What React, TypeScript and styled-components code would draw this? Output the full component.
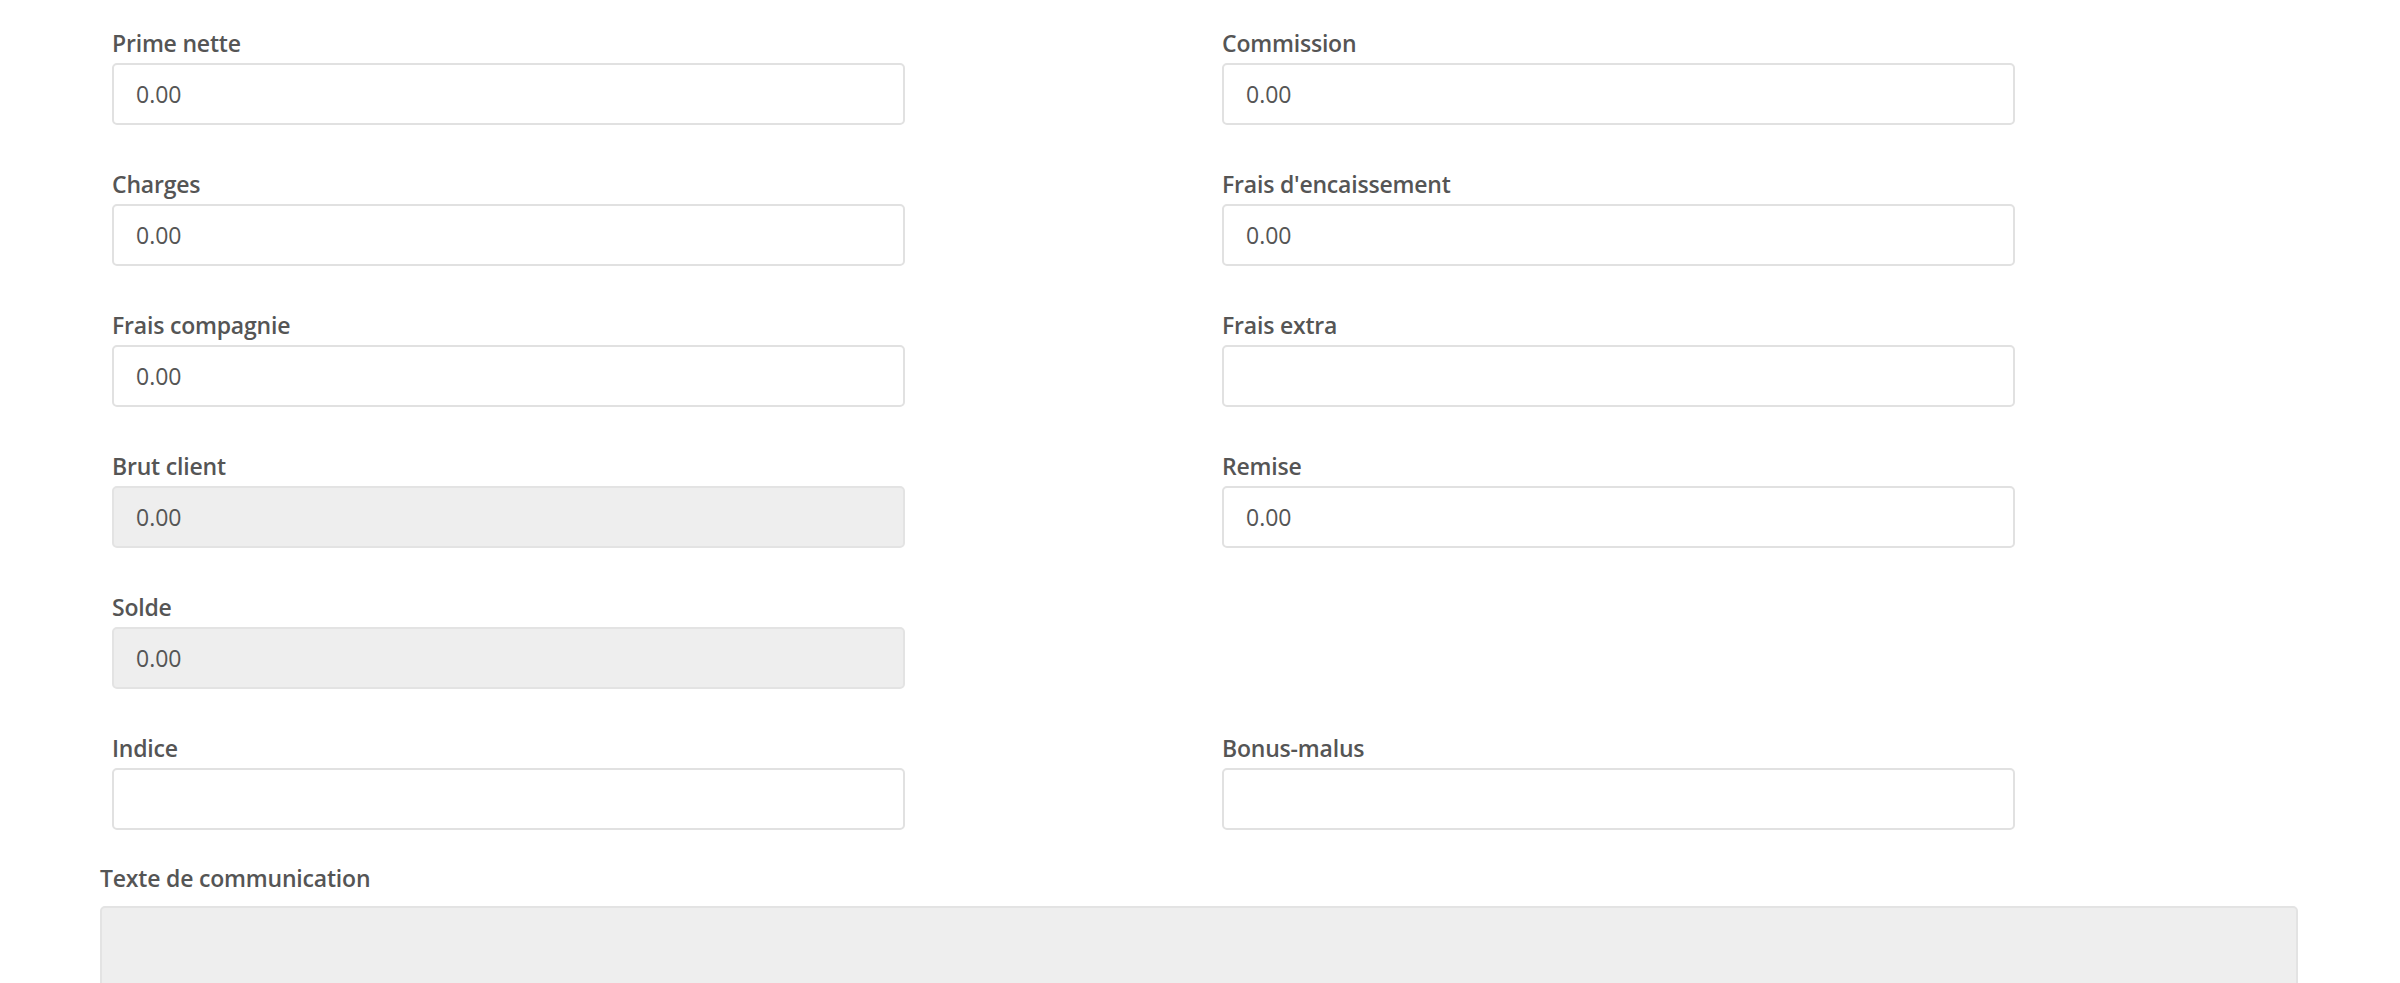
import React, { ReactElement } from "react";
import styled, { createGlobalStyle } from "styled-components";

const GlobalStyle = createGlobalStyle`
  html, body {
    margin: 0;
    padding: 0;
    background: #fff;
    font-family: "Open Sans", "Noto Sans", "Liberation Sans", sans-serif;
    color: #555;
  }
`;

interface Champ {
  name: string;
  label: string;
  value?: string;
  disabled?: boolean;
}

// Montants du contrat, deux colonnes ; null = case vide dans la grille
const champs: (Champ | null)[] = [
  { name: "primeNette", label: "Prime nette", value: "0.00" },
  { name: "commission", label: "Commission", value: "0.00" },
  { name: "charges", label: "Charges", value: "0.00" },
  { name: "fraisEncaissement", label: "Frais d'encaissement", value: "0.00" },
  { name: "fraisCompagnie", label: "Frais compagnie", value: "0.00" },
  { name: "fraisExtra", label: "Frais extra" },
  { name: "brutClient", label: "Brut client", value: "0.00", disabled: true },
  { name: "remise", label: "Remise", value: "0.00" },
  { name: "solde", label: "Solde", value: "0.00", disabled: true },
  null,
  { name: "indice", label: "Indice" },
  { name: "bonusMalus", label: "Bonus-malus" },
];

const Page = styled.div`
  width: 2198px;
  padding: 28px 0 0 100px;
`;

const ChampsGrid = styled.div`
  display: grid;
  grid-template-columns: 793px 793px;
  column-gap: 317px;
  padding-left: 12px;
`;

const ChampGroup = styled.div`
  display: flex;
  flex-direction: column;
  margin-bottom: 44px;
  min-height: 97px;
`;

const Label = styled.label<{ $spacing?: number }>`
  display: block;
  font-size: 23px;
  line-height: 30px;
  font-weight: 600;
  letter-spacing: -0.2px;
  color: #555;
  margin-bottom: ${(p) => p.$spacing ?? 5}px;
`;

const Input = styled.input`
  box-sizing: border-box;
  width: 100%;
  height: 62px;
  padding: 0 22px;
  font-family: inherit;
  font-size: 23px;
  color: #555;
  background: #fff;
  border: 2px solid #e1e1e1;
  border-radius: 5px;
  outline: none;

  &:disabled {
    background: #eee;
    border-color: #e3e3e3;
    opacity: 1;
    -webkit-text-fill-color: #555;
  }
`;

const CommunicationGroup = styled.div`
  margin-top: -11px;
`;

const TextArea = styled.textarea`
  display: block;
  box-sizing: border-box;
  width: 100%;
  height: 160px;
  resize: none;
  font-family: inherit;
  font-size: 23px;
  background: #eee;
  border: 2px solid #e3e3e3;
  border-radius: 5px;
`;

const Vide = styled.div``;

const ChampMontant = ({ champ }: { champ: Champ }): ReactElement => (
  <ChampGroup>
    <Label htmlFor={champ.name}>{champ.label}</Label>
    <Input
      id={champ.name}
      type="text"
      readOnly
      value={champ.value ?? ""}
      disabled={champ.disabled}
    />
  </ChampGroup>
);

const App = (): ReactElement => (
  <>
    <GlobalStyle />
    <Page>
      <ChampsGrid>
        {champs.map((champ, i) =>
          champ ? <ChampMontant key={champ.name} champ={champ} /> : <Vide key={i} />
        )}
      </ChampsGrid>
      <CommunicationGroup>
        <Label htmlFor="texteCommunication" $spacing={13}>
          Texte de communication
        </Label>
        <TextArea id="texteCommunication" disabled />
      </CommunicationGroup>
    </Page>
  </>
);

export default App;
